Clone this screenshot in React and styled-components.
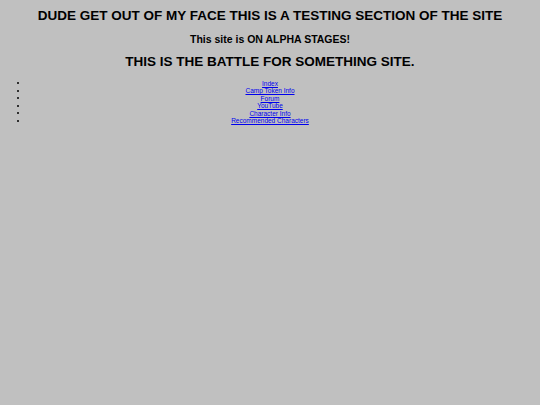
import React from "react";
import styled, { createGlobalStyle } from "styled-components";

const Global = createGlobalStyle`
  html, body { margin: 0; padding: 0; background: #c0c0c0; }
  body { padding: 4px; font-family: "Liberation Sans", Arial, sans-serif; }
`;

const Page = styled.div`
  display: flex;
  flex-direction: column;
  align-items: stretch;
`;

const Title = styled.h1`
  margin: 4px 0 0;
  font-size: 13.5px;
  line-height: 16px;
  font-weight: bold;
  text-align: center;
  color: #000;
`;

const Sub = styled.h3`
  margin: 9px 0 0;
  font-size: 10.5px;
  line-height: 12px;
  font-weight: bold;
  text-align: center;
  color: #000;
`;

const Big = styled.h2`
  margin: 9px 0 0;
  font-size: 13.5px;
  line-height: 16px;
  font-weight: bold;
  text-align: center;
  color: #000;
`;

const List = styled.ul`
  margin: 9.5px 0 0;
  padding: 0;
  list-style: none;
`;

const Item = styled.li`
  position: relative;
  font-size: 6.5px;
  line-height: 7.5px;
  text-align: center;
  &::before {
    content: "";
    position: absolute;
    left: 13px;
    top: calc(50% - 1px);
    width: 2px;
    height: 2px;
    border-radius: 50%;
    background: #000;
  }
`;

const Link = styled.a`
  color: #0000ee;
  text-decoration: underline;
`;

const links = ["Index", "Camp Token Info", "Forum", "YouTube", "Character Info", "Recommended Characters"];

export default function App() {
  return (
    <>
      <Global />
      <Page>
        <Title>DUDE GET OUT OF MY FACE THIS IS A TESTING SECTION OF THE SITE</Title>
        <Sub>This site is ON ALPHA STAGES!</Sub>
        <Big>THIS IS THE BATTLE FOR SOMETHING SITE.</Big>
        <List>
          {links.map((l) => (
            <Item key={l}>
              <Link href="#">{l}</Link>
            </Item>
          ))}
        </List>
      </Page>
    </>
  );
}
